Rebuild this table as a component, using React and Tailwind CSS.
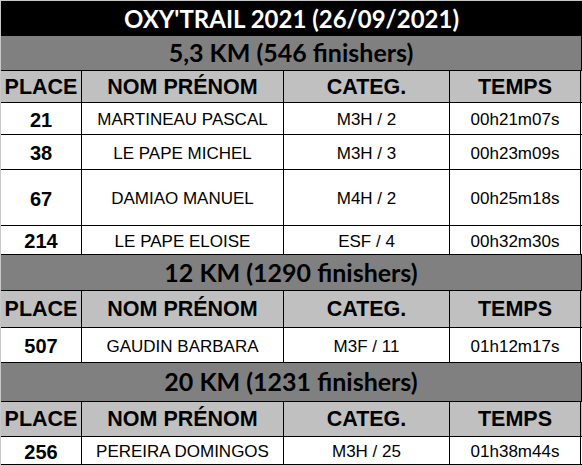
import React from 'react';

const sections = [
  {
    title: '5,3 KM (546 finishers)',
    h: 'h-[35px]',
    headH: 'h-[32px]',
    rows: [
      { place: '21', name: 'MARTINEAU PASCAL', cat: 'M3H / 2', time: '00h21m07s', h: 'h-[32px]' },
      { place: '38', name: 'LE PAPE MICHEL', cat: 'M3H / 3', time: '00h23m09s', h: 'h-[35px]' },
      { place: '67', name: 'DAMIAO MANUEL', cat: 'M4H / 2', time: '00h25m18s', h: 'h-[56px]' },
      { place: '214', name: 'LE PAPE ELOISE', cat: 'ESF / 4', time: '00h32m30s', h: 'h-[29px]' },
    ],
  },
  {
    title: '12 KM (1290 finishers)',
    h: 'h-[36px]',
    headH: 'h-[37px]',
    rows: [
      { place: '507', name: 'GAUDIN BARBARA', cat: 'M3F / 11', time: '01h12m17s', h: 'h-[35px]' },
    ],
  },
  {
    title: '20 KM (1231 finishers)',
    h: 'h-[39px]',
    headH: 'h-[35px]',
    rows: [
      { place: '256', name: 'PEREIRA DOMINGOS', cat: 'M3H / 25', time: '01h38m44s', h: 'h-[28px]' },
    ],
  },
];

const cols = 'grid grid-cols-[81px_202px_166px_131px]';
const cell = 'flex items-center justify-center border-r border-black pt-[2px]';

const Section = ({ s }) => (
  <>
    <div
      className={`${s.h} flex items-center justify-center bg-[#808080] border-b border-r border-black text-[25px] font-bold text-black`}
      style={{ fontFamily: 'Lato, "Open Sans", sans-serif' }}
    >
      {s.title}
    </div>
    <div className={`${cols} ${s.headH} bg-[#c0c0c0] border-b border-black text-[21.5px] font-bold text-black leading-none font-['Liberation_Sans',Arial,sans-serif]`}>
      <div className={cell}>PLACE</div>
      <div className={cell}>NOM PRÉNOM</div>
      <div className={cell}>CATEG.</div>
      <div className={cell}>TEMPS</div>
    </div>
    {s.rows.map((r) => (
      <div key={r.place} className={`${cols} ${r.h} bg-white border-b border-black text-[17px] text-black leading-none font-['Liberation_Sans',Arial,sans-serif]`}>
        <div className={`${cell} text-[20px] font-bold`}>{r.place}</div>
        <div className={cell}>{r.name}</div>
        <div className={cell}>{r.cat}</div>
        <div className={cell}>{r.time}</div>
      </div>
    ))}
  </>
);

export default function App() {
  return (
    <div
      className="w-[582px] h-[465px] overflow-hidden bg-white border-l border-t border-[#c8c8c8]"
      style={{ fontFamily: '"Liberation Sans", Arial, sans-serif' }}
    >
      <div className="w-[581px]">
        <div
          className="h-[35px] flex items-center justify-center bg-black text-white text-[24px] font-bold"
          style={{ fontFamily: 'Lato, "Open Sans", sans-serif' }}
        >
          OXY'TRAIL 2021 (26/09/2021)
        </div>
        {sections.map((s) => (
          <Section key={s.title} s={s} />
        ))}
      </div>
    </div>
  );
}
